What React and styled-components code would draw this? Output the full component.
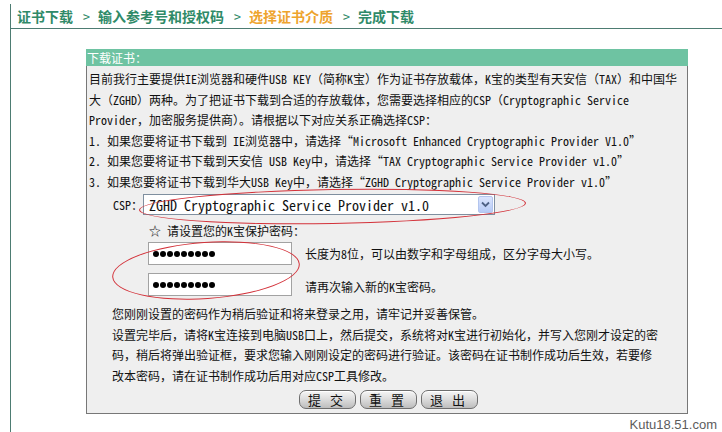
import React from 'react'
import styled, { createGlobalStyle } from 'styled-components'

const GlobalStyle = createGlobalStyle`
body{
margin:0;
background:#fff;
font-family:"Noto Sans Mono CJK SC","Noto Sans CJK SC",monospace;
color:#111;
}
`

const Page = styled.div`
position:relative;
width:722px;
height:432px;
overflow:hidden;
background:#fff;
`

const Frame = styled.div`
margin:4px 0 0 10px;
height:428px;
border-left:1px solid #4d7c72;
`

const Breadcrumb = styled.div`
display:flex;
align-items:center;
height:24px;
padding-left:6px;
border-bottom:1px solid #4d7c72;
font-size:14px;
font-weight:700;
white-space:nowrap;
`

const Crumb = styled.span`
color:${p => p.$active ? '#eea42e' : '#2f8a68'};
`

const Sep = styled.span`
color:#2f8a68;
font-weight:400;
margin:0 8px 0 10px;
`

const Content = styled.div`
padding:20px 0 0 75px;
`

const Panel = styled.div`
width:602px;
`

const PanelHead = styled.div`
height:17px;
line-height:17px;
background:#6ec3a2;
color:#fff;
font-size:12px;
padding-left:1px;
`

const PanelBody = styled.div`
box-sizing:border-box;
height:348px;
border:1px solid #777;
border-top:none;
background:#efefef;
padding:3px 0 0 2px;
display:flex;
flex-direction:column;
`

const Line = styled.div`
font-size:12px;
line-height:20.5px;
white-space:nowrap;
padding-left:${p => p.$indent || 0}px;
`

const CspRow = styled.div`
display:flex;
align-items:center;
margin-top:2px;
padding-left:24px;
font-size:12px;
`

const Select = styled.div`
box-sizing:border-box;
width:352px;
height:21px;
margin-left:0;
border:1px solid #7f8f9f;
background:#fff;
display:flex;
align-items:center;
padding-left:5px;
font-size:14px;
white-space:nowrap;
`

const Arrow = styled.div`
margin-left:auto;
margin-right:1px;
width:15px;
height:17px;
box-sizing:border-box;
border:1px solid #b3c5ee;
border-radius:2px;
background:linear-gradient(#dbe5fd,#b6caf6);
display:flex;
align-items:center;
justify-content:center;
`

const StarLine = styled.div`
margin-top:6px;
padding-left:60px;
font-size:12px;
line-height:20px;
`

const PwdRow = styled.div`
display:flex;
align-items:center;
padding-left:59px;
margin-top:${p => p.$first ? 1 : 8}px;
`

const PwdBox = styled.div`
box-sizing:border-box;
width:144px;
height:23px;
border:1px solid #a2a2a2;
background:#fff;
display:flex;
align-items:center;
gap:1px;
padding-left:4px;
`

const Dot = styled.span`
width:6px;
height:6px;
border-radius:50%;
background:#000;
`

const Hint = styled.span`
margin-left:13px;
font-size:12px;
margin-top:${p => p.$low ? 4 : 0}px;
`

const Para = styled.div`
margin-top:8px;
`

const ParaLine = styled.div`
font-size:12px;
line-height:20.7px;
padding-left:23px;
white-space:nowrap;
`

const Buttons = styled.div`
display:flex;
justify-content:center;
gap:4px;
margin-top:3px;
`

const Btn = styled.button`
box-sizing:border-box;
width:57px;
height:19px;
padding:0;
border:1px solid #6e6e6e;
border-radius:7px;
background:linear-gradient(#f6f6f6 0%,#dedede 45%,#bdbdbd 100%);
box-shadow:inset 0 1px 0 #fff;
font-family:"Noto Sans CJK SC",sans-serif;
font-size:13px;
line-height:17px;
letter-spacing:3px;
color:#111;
`

const Ellipse = styled.div`
position:absolute;
left:${p => p.$x}px;
top:${p => p.$y}px;
width:${p => p.$w}px;
height:${p => p.$h}px;
border:1.5px solid #d3323a;
border-radius:50%;
transform:rotate(${p => p.$r || 0}deg);
pointer-events:none;
`

const Watermark = styled.div`
position:absolute;
right:5px;
bottom:0;
font-family:"Liberation Sans",Arial,sans-serif;
font-size:13px;
color:#5c5c5c;
`

const Chevron = () => (
  <svg width="9" height="7" viewBox="0 0 9 7">
    <path d="M1 1.5 L4.5 5 L8 1.5" fill="none" stroke="#4d6185" strokeWidth="1.8" />
  </svg>
)

const dots = Array.from({ length: 9 })

export default function App() {
  return (
    <Page>
      <GlobalStyle />
      <Frame>
        <Breadcrumb>
          <Crumb>证书下载</Crumb>
          <Sep>&gt;</Sep>
          <Crumb>输入参考号和授权码</Crumb>
          <Sep>&gt;</Sep>
          <Crumb $active>选择证书介质</Crumb>
          <Sep>&gt;</Sep>
          <Crumb>完成下载</Crumb>
        </Breadcrumb>
        <Content>
          <Panel>
            <PanelHead>下载证书：</PanelHead>
            <PanelBody>
              <Line>目前我行主要提供IE浏览器和硬件USB KEY（简称K宝）作为证书存放载体，K宝的类型有天安信（TAX）和中国华</Line>
              <Line>大（ZGHD）两种。为了把证书下载到合适的存放载体，您需要选择相应的CSP（Cryptographic Service</Line>
              <Line>Provider，加密服务提供商）。请根据以下对应关系正确选择CSP：</Line>
              <Line>1. 如果您要将证书下载到 IE浏览器中，请选择“Microsoft Enhanced Cryptographic Provider V1.0”</Line>
              <Line>2. 如果您要将证书下载到天安信 USB Key中，请选择“TAX Cryptographic Service Provider v1.0”</Line>
              <Line>3. 如果您要将证书下载到华大USB Key中，请选择“ZGHD Cryptographic Service Provider v1.0”</Line>
              <CspRow>
                CSP：
                <Select>
                  ZGHD Cryptographic Service Provider v1.0
                  <Arrow><Chevron /></Arrow>
                </Select>
              </CspRow>
              <StarLine>☆ 请设置您的K宝保护密码：</StarLine>
              <PwdRow $first>
                <PwdBox>{dots.map((_, i) => <Dot key={i} />)}</PwdBox>
                <Hint>长度为8位，可以由数字和字母组成，区分字母大小写。</Hint>
              </PwdRow>
              <PwdRow>
                <PwdBox>{dots.map((_, i) => <Dot key={i} />)}</PwdBox>
                <Hint $low>请再次输入新的K宝密码。</Hint>
              </PwdRow>
              <Para>
                <ParaLine>您刚刚设置的密码作为稍后验证和将来登录之用，请牢记并妥善保管。</ParaLine>
                <ParaLine>设置完毕后，请将K宝连接到电脑USB口上，然后提交，系统将对K宝进行初始化，并写入您刚才设定的密</ParaLine>
                <ParaLine>码，稍后将弹出验证框，要求您输入刚刚设定的密码进行验证。该密码在证书制作成功后生效，若要修</ParaLine>
                <ParaLine>改本密码，请在证书制作成功后用对应CSP工具修改。</ParaLine>
              </Para>
              <Buttons>
                <Btn>提 交</Btn>
                <Btn>重 置</Btn>
                <Btn>退 出</Btn>
              </Buttons>
            </PanelBody>
          </Panel>
        </Content>
      </Frame>
      <Ellipse $x={139} $y={189} $w={385} $h={33} $r={-1} />
      <Ellipse $x={112} $y={242} $w={186} $h={55} $r={-4} />
      <Watermark>Kutu18.51.com</Watermark>
    </Page>
  )
}
